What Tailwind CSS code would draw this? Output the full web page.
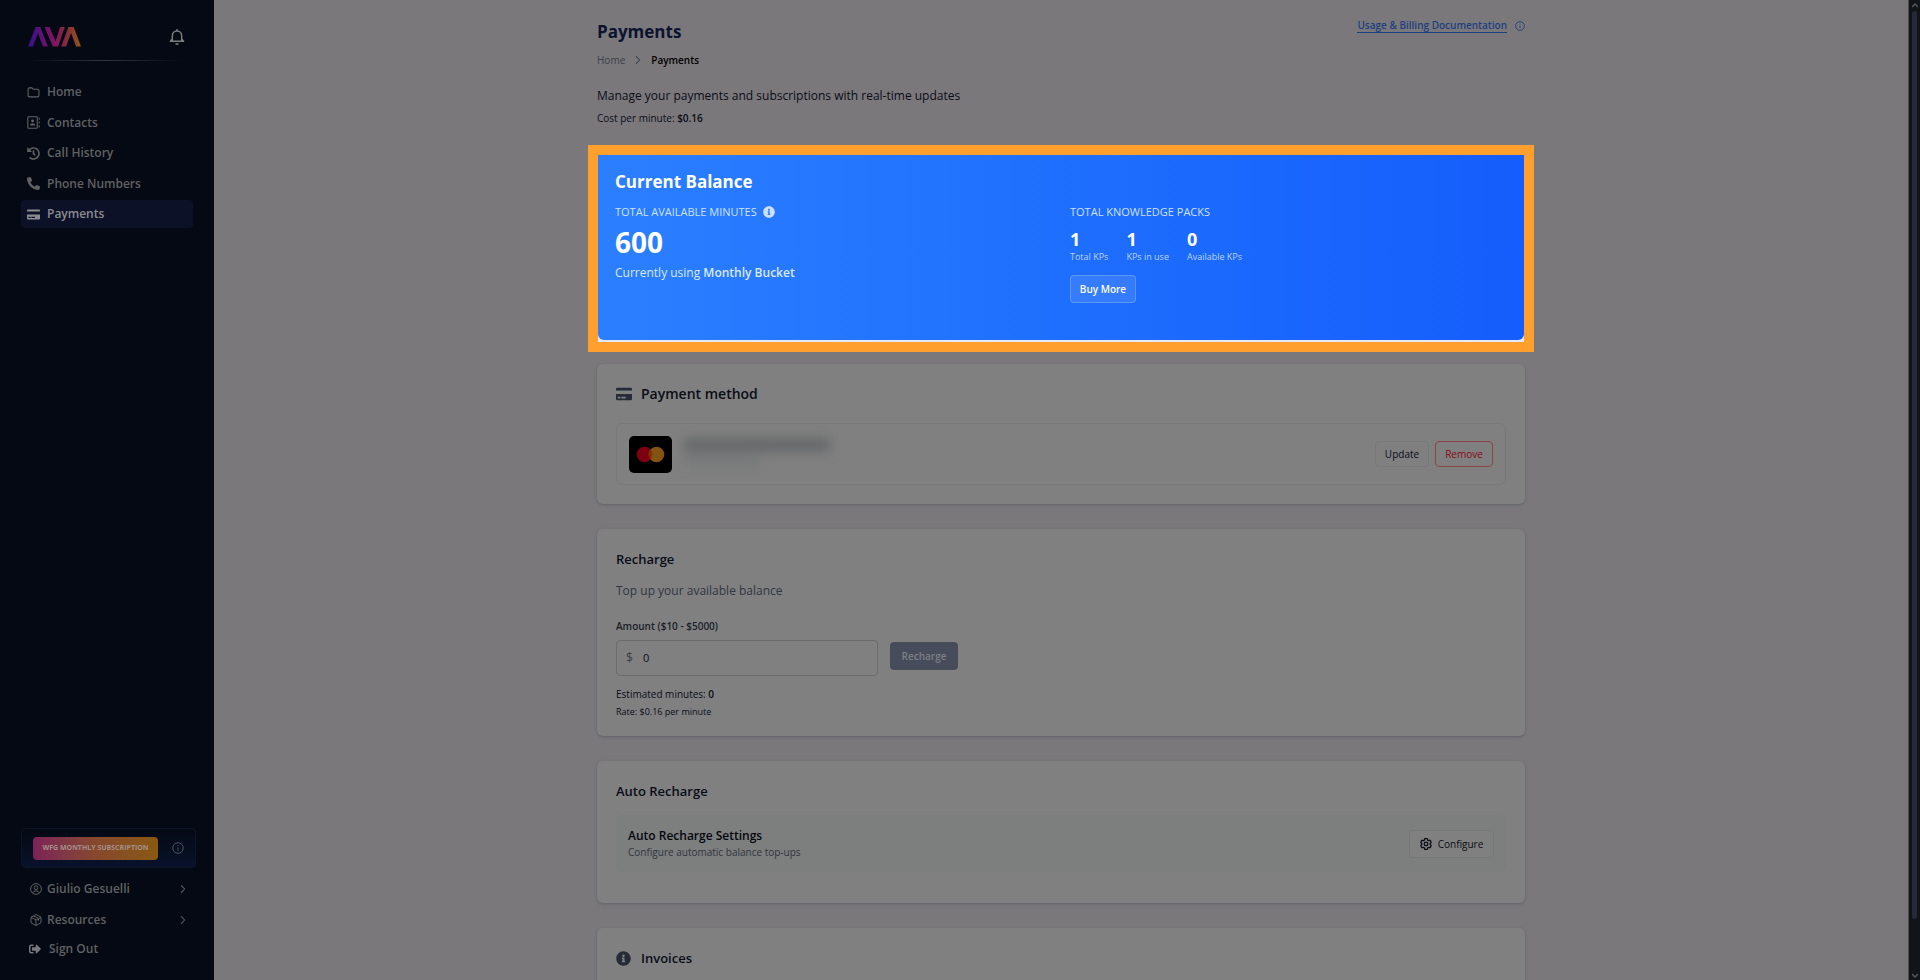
<!DOCTYPE html>
<html lang="en">

<head>
    <meta charset="UTF-8">
    <title>Payments</title>
    <script src="https://cdn.jsdelivr.net/npm/@tailwindcss/browser@4"></script>
</head>

<body class="flex h-screen overflow-hidden bg-[#7b787b] font-['Segoe_UI','Open_Sans',sans-serif] text-[12px] leading-4 text-[#0a0d16]">

    <!-- shared icons -->
    <svg class="hidden">
        <symbol id="card" viewBox="0 0 576 512">
            <path d="M0 432c0 26.500 21.500 48 48 48h480c26.500 0 48-21.500 48-48V256H0v176zm192-68c0-6.600 5.400-12 12-12h136c6.600 0 12 5.400 12 12v40c0 6.600-5.400 12-12 12H204c-6.600 0-12-5.400-12-12v-40zm-128 0c0-6.600 5.400-12 12-12h72c6.600 0 12 5.400 12 12v40c0 6.600-5.400 12-12 12H76c-6.600 0-12-5.400-12-12v-40zM576 80v48H0V80c0-26.500 21.500-48 48-48h480c26.500 0 48 21.500 48 48z" />
        </symbol>
        <symbol id="info" viewBox="0 0 512 512">
            <path d="M256 8C119.043 8 8 119.083 8 256c0 136.997 111.043 248 248 248s248-111.003 248-248C504 119.083 392.957 8 256 8zm0 110c23.196 0 42 18.804 42 42s-18.804 42-42 42-42-18.804-42-42 18.804-42 42-42zm56 254c0 6.627-5.373 12-12 12h-88c-6.627 0-12-5.373-12-12v-24c0-6.627 5.373-12 12-12h12v-64h-12c-6.627 0-12-5.373-12-12v-24c0-6.627 5.373-12 12-12h64c6.627 0 12 5.373 12 12v100h12c6.627 0 12 5.373 12 12v24z" />
        </symbol>
        <symbol id="info-line" viewBox="0 0 24 24" fill="none" stroke="currentColor" stroke-width="2">
            <circle cx="12" cy="12" r="10.500" />
            <path d="M12 10.500v7M12 6v2.200" />
        </symbol>
        <symbol id="chevron" viewBox="0 0 24 24" fill="none" stroke="currentColor" stroke-width="2.500" stroke-linecap="round" stroke-linejoin="round">
            <path d="M8 4l8 8-8 8" />
        </symbol>
    </svg>

    <aside class="flex w-[214px] shrink-0 flex-col bg-[#050913] pl-[21px] text-[12px] font-semibold text-[#5f6164]">
        <div class="mt-[27px] flex h-5 items-center justify-between pr-[29px] pl-[7px]">
            <svg class="h-5 w-[53px]" viewBox="0 0 160 60" fill="url(#brand)" role="img" aria-label="AVA">
                <defs>
                    <linearGradient id="brand" gradientUnits="userSpaceOnUse" x1="0" x2="160" y1="0" y2="0">
                        <stop offset="0" stop-color="#33128a" />
                        <stop offset=".45" stop-color="#7b1266" />
                        <stop offset=".7" stop-color="#84283f" />
                        <stop offset="1" stop-color="#8f551a" />
                    </linearGradient>
                </defs>
                <path d="M0 59L23 0h14l23 59H45L30 18 15 59zM50 0h15l18 43L97 0h14L91 59H75zM100 59L122 0h16l22 59h-15l-15-41-15 41z" />
            </svg>
            <button class="text-[#7c7d80]" aria-label="Notifications">
                <svg class="size-4" viewBox="0 0 24 24" fill="none" stroke="currentColor" stroke-width="2.200" stroke-linecap="round" stroke-linejoin="round">
                    <path d="M12 1v1.500M5 18V10a7 7 0 0 1 14 0v8M2 18.500h20M2.500 18L5 15M21.500 18L19 15M10.500 22.500h3" />
                </svg>
            </button>
        </div>
        <div class="mt-[13px] mr-[31px] ml-1.5 h-px bg-linear-to-r from-transparent via-[#34363c] to-transparent"></div>

        <nav class="mt-[17px] mr-[21px] flex h-[150px] flex-col justify-between">
            <a href="#" class="flex h-7 items-center gap-[7px] rounded px-1.5">
                <svg class="size-[13px]" viewBox="0 0 24 24" fill="none" stroke="currentColor" stroke-width="2" stroke-linejoin="round">
                    <path d="M2 6a2.500 2.500 0 0 1 2.500-2.500H9L11.500 6h8A2.500 2.500 0 0 1 22 8.500v9a2.500 2.500 0 0 1-2.500 2.500h-15A2.500 2.500 0 0 1 2 17.500z" />
                </svg>
                Home
            </a>
            <a href="#" class="flex h-7 items-center gap-[7px] rounded px-1.5">
                <svg class="size-[13px]" viewBox="0 0 24 24" fill="none" stroke="currentColor" stroke-width="2">
                    <rect x="1.500" y="1.500" width="17.500" height="21" rx="1.500" />
                    <path d="M22.500 3v4M22.500 10v4M22.500 17v4" />
                    <circle cx="10.300" cy="9" r="2.600" fill="currentColor" stroke="none" />
                    <path d="M5.500 17.500a4.800 4 0 0 1 9.600 0z" fill="currentColor" stroke="none" />
                </svg>
                Contacts
            </a>
            <a href="#" class="flex h-7 items-center gap-[7px] rounded px-1.5">
                <svg class="size-[13px]" viewBox="0 0 512 512" fill="currentColor">
                    <path d="M504 255.531c.253 136.640-111.180 248.372-247.820 248.468-59.015.042-113.223-20.530-155.822-54.911-11.077-8.940-11.905-25.541-1.839-35.607l11.267-11.267c8.609-8.609 22.353-9.551 31.891-1.984C173.062 425.135 212.781 440 256 440c101.705 0 184-82.311 184-184 0-101.705-82.311-184-184-184-48.814 0-93.149 18.969-126.068 49.932l50.754 50.754c10.080 10.080 2.941 27.314-11.313 27.314H24c-8.837 0-16-7.163-16-16V38.627c0-14.254 17.234-21.393 27.314-11.314l49.372 49.372C129.209 34.136 189.552 8 256 8c136.810 0 247.747 110.780 248 247.531zm-180.912 78.784l9.823-12.630c8.138-10.463 6.253-25.542-4.210-33.679L288 256.349V152c0-13.255-10.745-24-24-24h-16c-13.255 0-24 10.745-24 24v135.651l65.409 50.874c10.463 8.137 25.541 6.253 33.679-4.210z" />
                </svg>
                Call History
            </a>
            <a href="#" class="flex h-7 items-center gap-[7px] rounded px-1.5">
                <svg class="size-[13px]" viewBox="0 0 512 512" fill="currentColor">
                    <path d="M497.390 361.800l-112-48a24 24 0 0 0-28 6.900l-49.600 60.600A370.660 370.660 0 0 1 130.600 204.110l60.600-49.600a23.940 23.940 0 0 0 6.900-28l-48-112A24.160 24.160 0 0 0 122.600.61l-104 24A24 24 0 0 0 0 48c0 256.500 207.900 464 464 464a24 24 0 0 0 23.400-18.600l24-104a24.290 24.290 0 0 0-14.010-27.600z" />
                </svg>
                Phone Numbers
            </a>
            <a href="#" class="flex h-7 items-center gap-[7px] rounded bg-[#0d1128] px-1.5 text-[#8b8c90]">
                <svg class="size-[13px]" fill="currentColor"><use href="#card" /></svg>
                Payments
            </a>
        </nav>

        <div class="mt-auto mr-[18px] flex h-10 items-center justify-between rounded border border-[#0b1526] bg-linear-to-b from-[#050913] to-[#08122b] pr-[11px] pl-[11px]">
            <button class="h-[23px] w-[125px] rounded bg-linear-to-r from-[#7c2257] via-[#87482c] to-[#88590f] text-[7px] font-bold text-[#a39089]">WFG MONTHLY SUBSCRIPTION</button>
            <svg class="size-3 text-[#4a5468]"><use href="#info-line" /></svg>
        </div>
        <button class="mt-[7px] mr-[22px] flex h-7 items-center gap-[5px] pr-1 pl-[9px]">
            <svg class="size-3" viewBox="0 0 24 24" fill="none" stroke="currentColor" stroke-width="2">
                <circle cx="12" cy="12" r="10.800" />
                <circle cx="12" cy="9.500" r="3.800" />
                <path d="M5 20c1.500-3 4-4 7-4s5.500 1 7 4" />
            </svg>
            Giulio Gesuelli
            <svg class="ml-auto size-[10px]"><use href="#chevron" /></svg>
        </button>
        <button class="mt-[3px] mr-[22px] flex h-7 items-center gap-[5px] pr-1 pl-[9px]">
            <svg class="size-3" viewBox="0 0 24 24" fill="none" stroke="currentColor" stroke-width="2" stroke-linejoin="round">
                <path d="M12 1l10 5.500v11L12 23 2 17.500v-11zM2 6.500L12 12l10-5.500M12 12v11M7 3.800l10 5.500v4" />
            </svg>
            Resources
            <svg class="ml-auto size-[10px]"><use href="#chevron" /></svg>
        </button>
        <button class="mt-px mr-[22px] mb-[17px] flex h-7 items-center gap-2 pl-2">
            <svg class="size-3 text-[#77797c]" viewBox="0 0 512 512" fill="currentColor">
                <path d="M497 273L329 441c-15 15-41 4.500-41-17v-96H152c-13.300 0-24-10.700-24-24v-96c0-13.300 10.700-24 24-24h136V88c0-21.400 25.900-32 41-17l168 168c9.300 9.400 9.300 24.600 0 34zM192 436v-40c0-6.600-5.400-12-12-12H96c-17.700 0-32-14.300-32-32V160c0-17.700 14.300-32 32-32h84c6.600 0 12-5.400 12-12V76c0-6.600-5.400-12-12-12H96c-53 0-96 43-96 96v192c0 53 43 96 96 96h84c6.600 0 12-5.400 12-12z" />
            </svg>
            Sign Out
        </button>
    </aside>

    <main class="min-w-0 flex-1 overflow-hidden">
        <div class="mx-auto max-w-[928px]">
            <header class="flex items-start justify-between pt-[18px]">
                <div class="pt-0.5">
                    <h1 class="text-[17px] leading-6 font-bold text-[#0b1330]">Payments</h1>
                    <nav class="mt-2 flex items-center gap-2 text-[10px]">
                        <a href="#" class="text-[#3a3f48]">Home</a>
                        <svg class="size-[10px] text-[#3a3f48]"><use href="#chevron" /></svg>
                        <span class="font-semibold text-black">Payments</span>
                    </nav>
                </div>
                <div class="flex items-center gap-2 text-[#1b3f80]">
                    <a href="#" class="border-b border-[#1b3f80] text-[10px] leading-[14px] font-semibold">Usage &amp; Billing Documentation</a>
                    <svg class="size-[10px]"><use href="#info-line" /></svg>
                </div>
            </header>
            <p class="mt-5">Manage your payments and subscriptions with real-time updates</p>
            <p class="mt-1.5 text-[10px]">Cost per minute: <b class="font-semibold">$0.16</b></p>

            <section class="-mx-[9px] mt-[19px] border-[10px] border-[#ff9f2d] bg-[#e4e9f5] pb-0.5">
                <div class="grid h-[185px] grid-cols-2 content-start rounded-b-md bg-linear-to-r from-[#2b7fff] to-[#155dfc] px-[17px] pt-[17px] text-white">
                    <h2 class="col-span-2 text-[17px] leading-5 font-bold">Current Balance</h2>
                    <div class="mt-3">
                        <p class="flex items-center gap-1.5 text-[11px] text-[#cfe0ff]">TOTAL AVAILABLE MINUTES
                            <svg class="size-3" fill="currentColor"><use href="#info" /></svg>
                        </p>
                        <p class="mt-1.5 text-[28px] leading-8 font-bold">600</p>
                        <p class="mt-[7px] text-[#dbe8ff]">Currently using <b class="font-semibold">Monthly Bucket</b></p>
                    </div>
                    <div class="mt-3 pl-[9px]">
                        <p class="text-[11px] text-[#cfe0ff]">TOTAL KNOWLEDGE PACKS</p>
                        <dl class="mt-[7px] flex gap-[18px] text-[9px] leading-3 text-[#b9d2ff]">
                            <div class="flex flex-col-reverse"><dt>Total KPs</dt><dd class="text-[18px] leading-6 font-bold text-white">1</dd></div>
                            <div class="flex flex-col-reverse"><dt>KPs in use</dt><dd class="text-[18px] leading-6 font-bold text-white">1</dd></div>
                            <div class="flex flex-col-reverse"><dt>Available KPs</dt><dd class="text-[18px] leading-6 font-bold text-white">0</dd></div>
                        </dl>
                        <button class="mt-3 h-7 w-[66px] rounded border border-white/20 bg-white/10 text-[10px] font-semibold">Buy More</button>
                    </div>
                </div>
            </section>

            <section class="mt-3 rounded-md bg-[#808080] px-[19px] pt-5 pb-[19px] shadow-[0_1px_3px_#5f6468]">
                <h2 class="flex items-center gap-[9px] text-[14px] leading-5 font-semibold">
                    <svg class="size-4 text-[#262b38]" fill="currentColor"><use href="#card" /></svg>
                    Payment method
                </h2>
                <div class="mt-[19px] flex h-[62px] items-center rounded-md border border-[#767a7c] px-3">
                    <svg class="h-[37px] w-[43px]" viewBox="0 0 43 37" role="img" aria-label="Mastercard">
                        <rect width="43" height="37" rx="5" />
                        <circle cx="15.500" cy="18.500" r="7.800" fill="#7c000f" />
                        <circle cx="27.500" cy="18.500" r="7.800" fill="#83530f" />
                        <path d="M21.500 13.500a7.800 7.800 0 0 1 0 10 7.800 7.800 0 0 1 0-10z" fill="#803000" />
                    </svg>
                    <div class="mb-1 ml-3 flex flex-col gap-1.5 blur-[6px]">
                        <div class="h-3 w-[146px] bg-[#626466]"></div>
                        <div class="h-2 w-[76px] bg-[#747677]"></div>
                    </div>
                    <div class="ml-auto flex gap-1.5 text-[10px] font-medium">
                        <button class="h-[26px] w-[54px] rounded border border-[#76787a]">Update</button>
                        <button class="h-[26px] w-[58px] rounded border border-[#8b4548] text-[#870b16]">Remove</button>
                    </div>
                </div>
            </section>

            <section class="mt-[25px] rounded-md bg-[#808080] px-[19px] pt-5 pb-4 shadow-[0_1px_3px_#606068]">
                <h2 class="text-[13px] leading-5 font-semibold">Recharge</h2>
                <p class="mt-3.5 text-[#30353f]">Top up your available balance</p>
                <form class="mt-[19px]">
                    <label for="amount" class="block text-[10px] font-semibold text-[#1a1e29]">Amount ($10 - $5000)</label>
                    <div class="mt-1.5 flex items-center gap-3">
                        <div class="flex h-9 w-[262px] items-center gap-2.5 rounded border border-[#6a6c70] pl-[9px]">
                            <span class="text-[12px] text-[#383c44]">$</span>
                            <input id="amount" type="text" value="0" class="w-full bg-transparent text-[11px] outline-none">
                        </div>
                        <button type="button" class="mb-1 h-7 w-[68px] rounded bg-[#474c5b] text-[10px] font-semibold text-[#7d7f84]">Recharge</button>
                    </div>
                </form>
                <p class="mt-2.5 text-[10px]">Estimated minutes: <b class="font-semibold">0</b></p>
                <p class="mt-0.5 text-[9px]">Rate: $0.16 per minute</p>
            </section>

            <section class="mt-[25px] rounded-md bg-[#808080] px-[19px] pt-5 pb-[31px] shadow-[0_1px_3px_#606068]">
                <h2 class="text-[13px] leading-5 font-semibold">Auto Recharge</h2>
                <div class="mt-3.5 flex h-[57px] items-center justify-between rounded-md bg-[#7c7f7d] px-3">
                    <div>
                        <h3 class="font-semibold text-[#05070e]">Auto Recharge Settings</h3>
                        <p class="text-[10px] text-[#30353f]">Configure automatic balance top-ups</p>
                    </div>
                    <button class="flex h-7 w-[85px] items-center justify-center gap-1.5 rounded border border-[#757778] bg-[#808080] text-[10px] font-medium">
                        <svg class="size-3" viewBox="2 2 20 20" fill="none" stroke="currentColor" stroke-width="2.200">
                            <path d="M9.594 3.940c.09-.542.56-.94 1.110-.94h2.593c.55 0 1.020.398 1.110.94l.213 1.281c.063.374.313.686.645.870.074.040.147.083.220.127.325.196.720.257 1.075.124l1.217-.456a1.125 1.125 0 0 1 1.370.490l1.296 2.247a1.125 1.125 0 0 1-.260 1.431l-1.003.827c-.293.241-.438.613-.430.992a7.723 7.723 0 0 1 0 .255c-.008.378.137.750.430.991l1.004.827c.424.350.534.955.260 1.430l-1.298 2.247a1.125 1.125 0 0 1-1.369.491l-1.217-.456c-.355-.133-.750-.072-1.076.124a6.470 6.470 0 0 1-.220.128c-.331.183-.581.495-.644.869l-.213 1.281c-.090.543-.560.940-1.110.940h-2.594c-.550 0-1.019-.398-1.110-.940l-.213-1.281c-.062-.374-.312-.686-.644-.870a6.520 6.520 0 0 1-.220-.127c-.325-.196-.720-.257-1.076-.124l-1.217.456a1.125 1.125 0 0 1-1.369-.490l-1.297-2.247a1.125 1.125 0 0 1 .260-1.431l1.004-.827c.292-.240.437-.613.430-.991a6.932 6.932 0 0 1 0-.255c.007-.380-.138-.751-.430-.992l-1.004-.827a1.125 1.125 0 0 1-.260-1.430l1.297-2.247a1.125 1.125 0 0 1 1.370-.491l1.216.456c.356.133.751.072 1.076-.124.072-.044.146-.086.220-.128.332-.183.582-.495.644-.869z" />
                            <circle cx="12" cy="12" r="3" />
                        </svg>
                        Configure
                    </button>
                </div>
            </section>

            <section class="mt-[25px] rounded-md bg-[#808080] px-[19px] pt-5 pb-10 shadow-[0_1px_3px_#606068]">
                <h2 class="flex items-center gap-2.5 text-[13px] leading-5 font-semibold">
                    <svg class="size-[15px] text-[#262b38]" fill="currentColor"><use href="#info" /></svg>
                    Invoices
                </h2>
            </section>
        </div>
    </main>

    <!-- scroll track -->
    <div class="flex w-3 shrink-0 flex-col items-center border-l border-[#4c4b4e] bg-[#131419] text-[#55565a]">
        <svg class="mt-[3px] h-[5px] w-[6px]" viewBox="0 0 6 5" fill="none" stroke="currentColor" stroke-width="1.500"><path d="M0 4l3-3 3 3" /></svg>
        <div class="mt-[3px] mb-[54px] w-[5px] flex-1 rounded-full bg-[#262a38]"></div>
        <svg class="mb-[2px] h-[5px] w-[6px]" viewBox="0 0 6 5" fill="none" stroke="currentColor" stroke-width="1.500"><path d="M0 1l3 3 3-3" /></svg>
    </div>
</body>

</html>
